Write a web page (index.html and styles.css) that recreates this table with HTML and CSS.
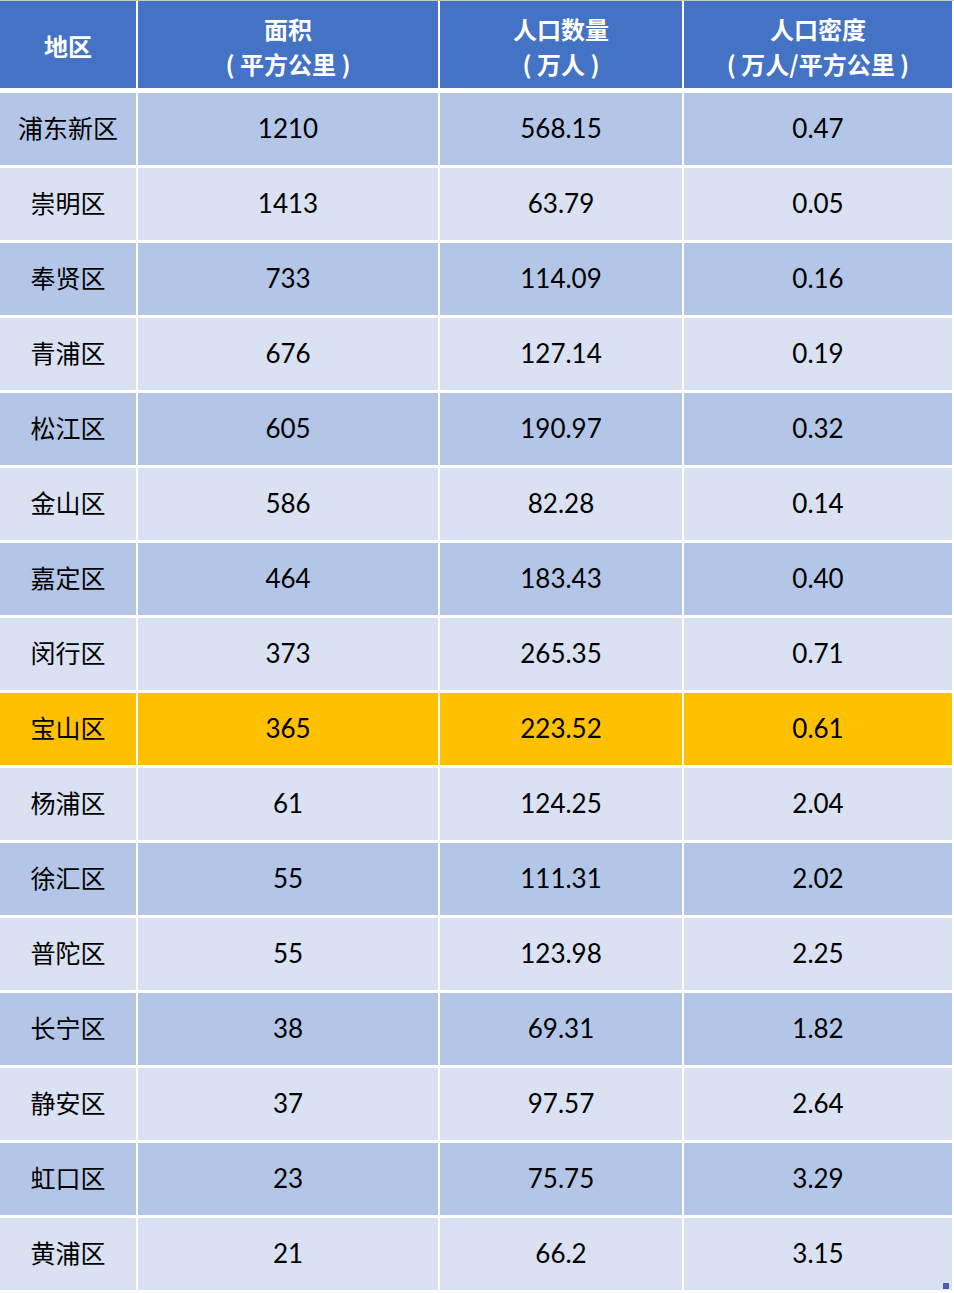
FILE: index.html
```html
<!DOCTYPE html>
<html lang="zh">
<head>
<meta charset="utf-8">
<title>上海各区人口密度</title>
<link rel="stylesheet" href="styles.css">
</head>
<body>
<div class="sheet">
  <div class="grid">
    <div class="cell head"><div>地区</div></div>
    <div class="cell head"><div>面积<br>( 平方公里 )</div></div>
    <div class="cell head"><div>人口数量<br>( 万人 )</div></div>
    <div class="cell head"><div>人口密度<br>( 万人/平方公里 )</div></div>
  </div>
  <div class="grid body">
    <div class="cell dark name">浦东新区</div><div class="cell dark">1210</div><div class="cell dark">568.15</div><div class="cell dark">0.47</div>
    <div class="cell light name">崇明区</div><div class="cell light">1413</div><div class="cell light">63.79</div><div class="cell light">0.05</div>
    <div class="cell dark name">奉贤区</div><div class="cell dark">733</div><div class="cell dark">114.09</div><div class="cell dark">0.16</div>
    <div class="cell light name">青浦区</div><div class="cell light">676</div><div class="cell light">127.14</div><div class="cell light">0.19</div>
    <div class="cell dark name">松江区</div><div class="cell dark">605</div><div class="cell dark">190.97</div><div class="cell dark">0.32</div>
    <div class="cell light name">金山区</div><div class="cell light">586</div><div class="cell light">82.28</div><div class="cell light">0.14</div>
    <div class="cell dark name">嘉定区</div><div class="cell dark">464</div><div class="cell dark">183.43</div><div class="cell dark">0.40</div>
    <div class="cell light name">闵行区</div><div class="cell light">373</div><div class="cell light">265.35</div><div class="cell light">0.71</div>
    <div class="cell hl name">宝山区</div><div class="cell hl">365</div><div class="cell hl">223.52</div><div class="cell hl">0.61</div>
    <div class="cell light name">杨浦区</div><div class="cell light">61</div><div class="cell light">124.25</div><div class="cell light">2.04</div>
    <div class="cell dark name">徐汇区</div><div class="cell dark">55</div><div class="cell dark">111.31</div><div class="cell dark">2.02</div>
    <div class="cell light name">普陀区</div><div class="cell light">55</div><div class="cell light">123.98</div><div class="cell light">2.25</div>
    <div class="cell dark name">长宁区</div><div class="cell dark">38</div><div class="cell dark">69.31</div><div class="cell dark">1.82</div>
    <div class="cell light name">静安区</div><div class="cell light">37</div><div class="cell light">97.57</div><div class="cell light">2.64</div>
    <div class="cell dark name">虹口区</div><div class="cell dark">23</div><div class="cell dark">75.75</div><div class="cell dark">3.29</div>
    <div class="cell light name">黄浦区</div><div class="cell light">21</div><div class="cell light">66.2</div><div class="cell light">3.15</div>
  </div>
  <div class="handle"></div>
</div>
</body>
</html>
```
FILE: styles.css
```css
html, body {
  margin: 0;
  padding: 0;
  background: #ffffff;
}
.sheet {
  position: relative;
  width: 954px;
  height: 1293px;
  border-top: 1px solid #c8c8c8;
  box-sizing: border-box;
  overflow: hidden;
}
.grid {
  display: grid;
  grid-template-columns: 136px 300px 242px 268px;
  column-gap: 2px;
  row-gap: 3px;
  width: 954px;
}
.grid.body {
  margin-top: 5px;
  grid-auto-rows: 72px;
}
.cell {
  display: flex;
  align-items: center;
  justify-content: center;
  text-align: center;
  font-family: Lato, "Noto Sans CJK SC", sans-serif;
  font-size: 26px;
  color: #000000;
  padding-bottom: 3px;
  box-sizing: border-box;
}
.cell.name {
  font-family: "Noto Sans CJK SC", sans-serif;
  font-size: 25px;
  padding-bottom: 5px;
}
.head {
  height: 87px;
  padding-top: 2px;
  padding-bottom: 0;
  background: #4472c4;
  color: #ffffff;
  font-family: "Noto Sans CJK SC", sans-serif;
  font-weight: 700;
  font-size: 24px;
  line-height: 35px;
}
.dark { background: #b4c6e7; }
.light { background: #d9e1f2; }
.hl { background: #ffc000; }
.handle {
  position: absolute;
  right: 5px;
  bottom: 4px;
  width: 6px;
  height: 6px;
  background: #4a5fb0;
}
```
